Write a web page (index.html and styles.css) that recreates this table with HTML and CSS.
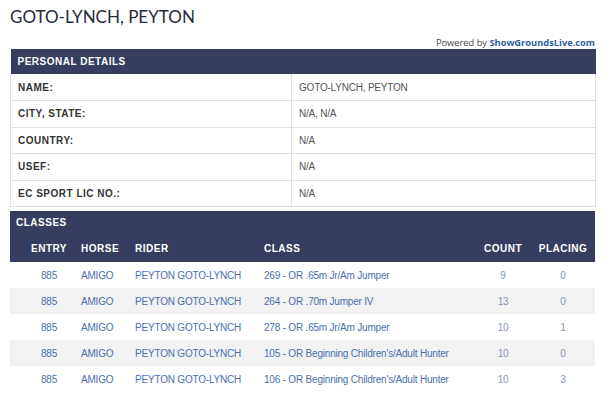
FILE: index.html
```html
<!DOCTYPE html>
<html>
<head>
<meta charset="utf-8">
<link rel="stylesheet" href="styles.css">
</head>
<body>
<div class="page">
  <h1 class="title">GOTO-LYNCH, PEYTON</h1>
  <div class="powered">Powered by <a class="sgl">ShowGroundsLive.com</a></div>
  <table class="details">
    <colgroup><col class="c-label"><col class="c-value"></colgroup>
    <thead>
      <tr><th colspan="2" class="bar">PERSONAL DETAILS</th></tr>
    </thead>
    <tbody>
      <tr><td class="label">NAME:</td><td class="value">GOTO-LYNCH, PEYTON</td></tr>
      <tr><td class="label">CITY, STATE:</td><td class="value">N/A, N/A</td></tr>
      <tr><td class="label">COUNTRY:</td><td class="value">N/A</td></tr>
      <tr><td class="label">USEF:</td><td class="value">N/A</td></tr>
      <tr><td class="label">EC SPORT LIC NO.:</td><td class="value">N/A</td></tr>
    </tbody>
  </table>
  <table class="classes">
    <colgroup>
      <col class="w-entry"><col class="w-horse"><col class="w-rider"><col class="w-class"><col class="w-count"><col class="w-placing">
    </colgroup>
    <thead>
      <tr class="cap"><th colspan="6" class="caption">CLASSES</th></tr>
      <tr class="heads">
        <th class="entry">ENTRY</th><th class="txt">HORSE</th><th class="txt">RIDER</th><th class="txt">CLASS</th><th class="num">COUNT</th><th class="placing">PLACING</th>
      </tr>
    </thead>
    <tbody>
      <tr><td class="entry"><a>885</a></td><td class="txt"><a>AMIGO</a></td><td class="txt"><a>PEYTON GOTO-LYNCH</a></td><td class="txt"><a>269 - OR .65m Jr/Am Jumper</a></td><td class="num">9</td><td class="placing">0</td></tr>
      <tr><td class="entry"><a>885</a></td><td class="txt"><a>AMIGO</a></td><td class="txt"><a>PEYTON GOTO-LYNCH</a></td><td class="txt"><a>264 - OR .70m Jumper IV</a></td><td class="num">13</td><td class="placing">0</td></tr>
      <tr><td class="entry"><a>885</a></td><td class="txt"><a>AMIGO</a></td><td class="txt"><a>PEYTON GOTO-LYNCH</a></td><td class="txt"><a>278 - OR .65m Jr/Am Jumper</a></td><td class="num">10</td><td class="placing">1</td></tr>
      <tr><td class="entry"><a>885</a></td><td class="txt"><a>AMIGO</a></td><td class="txt"><a>PEYTON GOTO-LYNCH</a></td><td class="txt"><a>105 - OR Beginning Children's/Adult Hunter</a></td><td class="num">10</td><td class="placing">0</td></tr>
      <tr><td class="entry"><a>885</a></td><td class="txt"><a>AMIGO</a></td><td class="txt"><a>PEYTON GOTO-LYNCH</a></td><td class="txt"><a>106 - OR Beginning Children's/Adult Hunter</a></td><td class="num">10</td><td class="placing">3</td></tr>
    </tbody>
  </table>
</div>
</body>
</html>
```
FILE: styles.css
```css
html, body {
  margin: 0;
  padding: 0;
  background: #ffffff;
}
body {
  font-family: "Liberation Sans", Arial, sans-serif;
  font-size: 10px;
  color: #333333;
}
.page {
  width: 585px;
  margin-left: 10px;
  padding-top: 5px;
}
.title {
  font-family: Lato, "Liberation Sans", sans-serif;
  font-weight: 400;
  font-size: 17px;
  line-height: 23px;
  color: #262b3b;
  margin: 0;
}
.powered {
  text-align: right;
  font-family: "Open Sans", "DejaVu Sans", sans-serif;
  font-size: 9.3px;
  line-height: 13px;
  color: #444444;
  margin-top: 8px;
  margin-bottom: 0;
}
.sgl {
  color: #2c5f9e;
  font-weight: 700;
  text-decoration: none;
}
table {
  border-collapse: collapse;
  width: 585px;
  table-layout: fixed;
}
.c-label { width: 281px; }
.c-value { width: 304px; }
.bar {
  background: #363d60;
  color: #ffffff;
  text-align: left;
  font-weight: 700;
  letter-spacing: 0.5px;
  height: 25px;
  padding: 0 7px;
  box-sizing: border-box;
}
.details tbody td {
  height: 26.5px;
  padding: 0 7px;
  border: 1px solid #e1e1e1;
  border-top: none;
  box-sizing: border-box;
}
.details .label {
  font-weight: 700;
  letter-spacing: 0.5px;
  color: #333333;
}
.details .value {
  color: #555555;
  letter-spacing: -0.2px;
}
.classes {
  margin-top: 4px;
}
.w-entry { width: 65px; }
.w-horse { width: 54px; }
.w-rider { width: 129px; }
.w-class { width: 217px; }
.w-count { width: 56px; }
.w-placing { width: 64px; }
.classes thead th {
  background: #363d60;
  color: #ffffff;
  font-weight: 700;
  letter-spacing: 0.5px;
  text-align: left;
  padding: 0 6px;
  box-sizing: border-box;
}
.classes .caption {
  height: 24px;
  padding-bottom: 2px;
}
.classes .heads th {
  height: 27px;
}
.classes td {
  height: 26px;
  padding: 0 6px;
  color: #8597b8;
  white-space: nowrap;
  letter-spacing: -0.2px;
  box-sizing: border-box;
}
.classes a {
  color: #4a70ae;
  text-decoration: none;
}
.classes tbody tr:nth-child(even) td {
  background: #f2f2f2;
}
.classes .entry {
  text-align: center;
  padding-left: 13px;
  padding-right: 0;
}
.classes td.num,
.classes td.placing {
  text-align: center;
  padding: 0;
}
.classes thead th.num,
.classes thead th.placing {
  text-align: center;
  padding: 0;
}
.classes thead th.entry {
  text-align: center;
  padding-left: 13px;
  padding-right: 0;
}
```
